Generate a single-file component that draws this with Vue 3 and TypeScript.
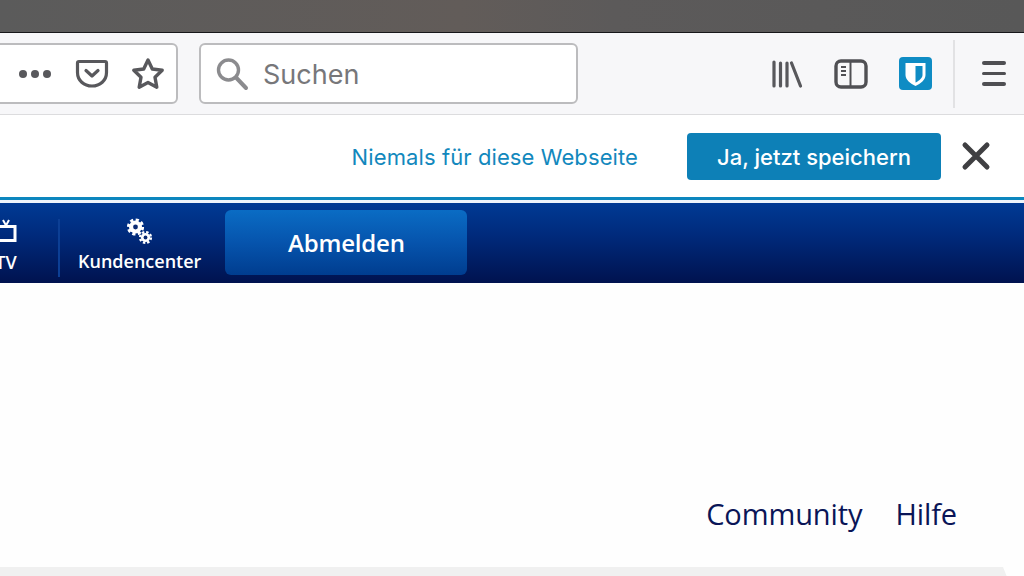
<script setup lang="ts">
const footerLinks: string[] = ['Community', 'Hilfe']
</script>

<template>
  <div class="page">
    <div class="titlebar"></div>
    <div class="toolbar">
      <div class="urlbar">
        <span class="dots"><i></i><i></i><i></i></span>
        <svg class="pocket" width="34" height="32" viewBox="0 1 34 32" fill="none" stroke="#58585c" stroke-width="3.2" stroke-linejoin="round" stroke-linecap="round">
          <path d="M4 4.500h26a1.500 1.500 0 0 1 1.500 1.500v9.500C31.500 23.500 25 29 17 29S2.500 23.500 2.500 15.500V6A1.500 1.500 0 0 1 4 4.500z" />
          <path d="M11 13.500l6 5.500 6-5.500" />
        </svg>
        <svg class="star" width="34" height="34" viewBox="0 0 34 34" fill="none" stroke="#58585c" stroke-width="3.4" stroke-linejoin="round">
          <path d="M17 3l4.300 9 9.900 1.300-7.200 6.900 1.800 10L17 25.500l-8.800 4.700 1.800-10-7.200-6.900 9.900-1.300z" />
        </svg>
      </div>
      <div class="search">
        <svg width="36" height="36" viewBox="0 0 36 36" fill="none" stroke="#8b8b8e" stroke-linecap="round">
          <circle cx="14.500" cy="14" r="10" stroke-width="3.400" />
          <path d="M22 21.500L32 32" stroke-width="4" />
        </svg>
        <span class="search-text">Suchen</span>
      </div>
      <div class="tools">
        <svg class="library" width="32" height="30" viewBox="0 0 32 30" fill="none" stroke="#58585c" stroke-width="3.200" stroke-linecap="round">
          <path d="M3 3v24M9.500 4v23M16 4v23M20.500 4l9 23" />
        </svg>
        <svg class="sidebar" width="34" height="30" viewBox="0 0 34 30" fill="none">
          <rect x="2" y="2" width="30" height="26" rx="5" stroke="#505054" stroke-width="3.400" />
          <path d="M16.500 3v24" stroke="#505054" stroke-width="2" />
          <path d="M7 8h5M7 12h5M7 16h5" stroke="#505054" stroke-width="1.800" />
        </svg>
        <svg class="warden" width="33" height="33" viewBox="0 0 33 33">
          <rect width="33" height="33" rx="4" fill="#0f8cc4" />
          <path d="M6.500 6h20v12c0 5-5 8.500-10 11-5-2.500-10-6-10-11z" fill="#fff" />
          <path d="M16.500 9h7v9c0 3.200-3.500 5.800-7 7.600z" fill="#0f8cc4" />
        </svg>
        <span class="divider"></span>
        <span class="burger"><i></i><i></i><i></i></span>
      </div>
    </div>
    <div class="notification">
      <a class="never">Niemals für diese Webseite</a>
      <button class="save">Ja, jetzt speichern</button>
      <svg class="close" width="30" height="30" viewBox="0 0 30 30" stroke="#3f3f42" stroke-width="5" stroke-linecap="round">
        <path d="M4 4l22 22M26 4L4 26" />
      </svg>
    </div>
    <div class="rule"></div>
    <nav class="nav">
      <div class="nav-item tv">
        <svg width="22" height="30" viewBox="0 0 22 30" fill="none" stroke="#fff" stroke-width="3">
          <path d="M-4 10.500h24v14H-4z" />
          <path d="M8 4l3 5.500 3-5.500" stroke-width="2" />
        </svg>
        <span>TV</span>
      </div>
      <span class="nav-sep"></span>
      <div class="nav-item center">
        <svg width="26" height="28" viewBox="0 0 26 28" fill="#fff">
          <circle cx="8.500" cy="9" r="7.200" fill="none" stroke="#fff" stroke-width="2.800" stroke-dasharray="3.200 2.450" />
          <circle cx="8.500" cy="9" r="6.500" />
          <circle cx="8.500" cy="9" r="2.400" fill="#0a2a72" />
          <circle cx="18.500" cy="19.500" r="5.400" fill="none" stroke="#fff" stroke-width="2.400" stroke-dasharray="2.400 1.840" />
          <circle cx="18.500" cy="19.500" r="4.600" />
          <circle cx="18.500" cy="19.500" r="1.900" fill="#0a2a72" />
        </svg>
        <span>Kundencenter</span>
      </div>
      <button class="logout">Abmelden</button>
    </nav>
    <main class="content">
      <div class="links">
        <a v-for="link in footerLinks" :key="link">{{ link }}</a>
      </div>
      <div class="panel"></div>
    </main>
  </div>
</template>

<style>
html, body { margin: 0; background: #fff; overflow: hidden; }
</style>

<style scoped>
.page {
  width: 1024px;
  height: 576px;
  overflow: hidden;
  display: flex;
  flex-direction: column;
  background: #fefefe;
  font-family: "Open Sans", sans-serif;
}
.titlebar {
  height: 32px;
  background: linear-gradient(90deg, #5b5b5b 0%, #625c59 45%, #5c5a5a 60%, #585858 100%);
  border-bottom: 1px solid #17171a;
  flex: none;
}
.toolbar {
  height: 81px;
  flex: none;
  display: flex;
  align-items: center;
  background: #f7f7f9;
  border-bottom: 1px solid #dcdcde;
}
.urlbar {
  box-sizing: border-box;
  width: 198px;
  height: 61px;
  margin-left: -20px;
  display: flex;
  align-items: center;
  background: #fff;
  border: 2px solid #bcbcbe;
  border-radius: 6px;
}
.dots { display: flex; gap: 4px; margin-left: 37px; }
.dots i { width: 8px; height: 8px; border-radius: 50%; background: #58585c; }
.pocket { margin-left: 24px; }
.star { margin-left: 22px; }
.search {
  box-sizing: border-box;
  width: 379px;
  height: 61px;
  margin-left: 21px;
  display: flex;
  align-items: center;
  background: #fff;
  border: 2px solid #bcbcbe;
  border-radius: 6px;
  padding-left: 13px;
}
.search-text {
  margin-left: 13px;
  padding-top: 2px;
  font-family: Inter, sans-serif;
  font-size: 27px;
  color: #77777a;
}
.tools {
  display: flex;
  align-items: center;
  margin-left: 193px;
}
.sidebar { margin-left: 31px; }
.warden { margin-left: 31px; }
.divider {
  width: 2px;
  height: 68px;
  margin-left: 21px;
  background: #e2e2e4;
}
.burger {
  display: flex;
  flex-direction: column;
  gap: 7px;
  margin-left: 27px;
}
.burger i { width: 24px; height: 3.500px; border-radius: 2px; background: #4f4f53; }
.notification {
  height: 82px;
  flex: none;
  box-sizing: border-box;
  display: flex;
  align-items: center;
  justify-content: flex-end;
  padding-right: 33px;
  background: #fff;
}
.never {
  padding-top: 2px;
  font-family: Inter, sans-serif;
  font-size: 22px;
  letter-spacing: 0.100px;
  color: #1288bd;
}
.save {
  width: 254px;
  height: 47px;
  margin-left: 49px;
  padding: 2px 0 0;
  border: 0;
  border-radius: 4px;
  background: #0d80b7;
  color: #fff;
  font-family: Inter, sans-serif;
  font-size: 22px;
  font-weight: 500;
}
.close { margin-left: 20px; }
.rule {
  height: 3px;
  flex: none;
  background: #0c86be;
  border-bottom: 3px solid #eef5fb;
}
.nav {
  height: 80px;
  flex: none;
  box-sizing: border-box;
  display: flex;
  align-items: flex-start;
  background: linear-gradient(180deg, #003a94 0%, #002a7c 40%, #00124f 100%);
  color: #fff;
}
.nav-item {
  display: flex;
  flex-direction: column;
  align-items: center;
  font-size: 18px;
  font-weight: 600;
  line-height: 22px;
}
.tv {
  width: 20px;
  margin-left: -4px;
  padding-top: 13px;
  gap: 5px;
}
.nav-sep {
  width: 2px;
  height: 58px;
  margin: 16px 0 0 42px;
  background: #0c3f95;
}
.center {
  margin-left: 18px;
  padding-top: 15px;
  gap: 4px;
}
.logout {
  width: 242px;
  height: 65px;
  margin: 7px 0 0 24px;
  padding: 0;
  border: 0;
  border-radius: 6px;
  background: linear-gradient(180deg, #0a6cc4 0%, #0654ad 50%, #003d8f 100%);
  color: #fff;
  font-family: "Open Sans", sans-serif;
  font-size: 24px;
  font-weight: 600;
  letter-spacing: -0.200px;
}
.content {
  flex: 1;
  display: flex;
  flex-direction: column;
}
.links {
  display: flex;
  justify-content: flex-end;
  gap: 33px;
  margin-top: 210px;
  padding-right: 67px;
  font-size: 29px;
  line-height: 42px;
  color: #0a1557;
  letter-spacing: -0.100px;
}
.panel {
  height: 10px;
  margin-top: 32px;
  width: 1007px;
  background: #f0f0f0;
  clip-path: polygon(0 0, 1003px 0, 100% 100%, 0 100%);
}
</style>
